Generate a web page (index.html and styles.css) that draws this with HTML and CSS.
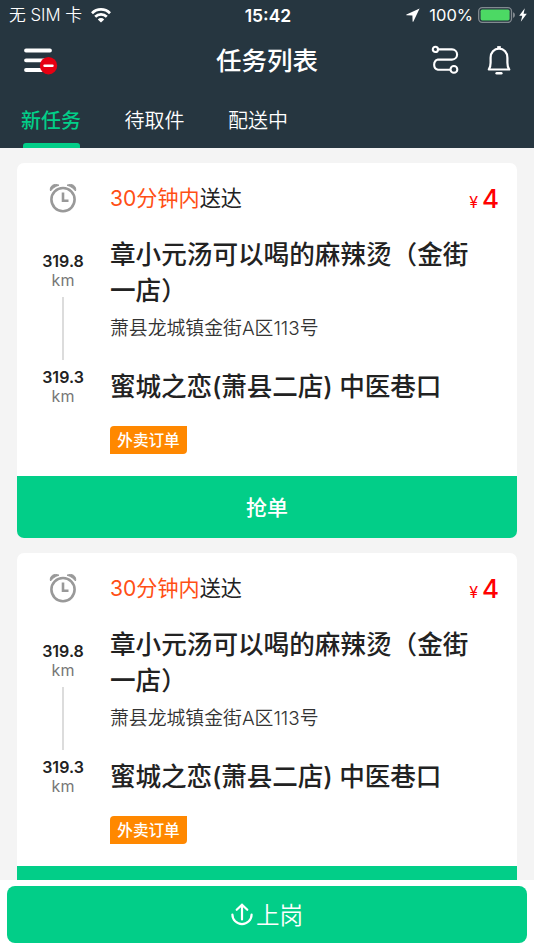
FILE: index.html
```
<!DOCTYPE html>
<html lang="zh-CN">

<head>
  <meta charset="UTF-8">
  <meta name="viewport" content="width=device-width, initial-scale=1.0">
  <title>任务列表</title>
  <link rel="stylesheet" href="styles.css">
</head>

<body>
  <header class="header">
    <div class="status">
      <div class="status-left">
        <span>无 SIM 卡</span>
        <svg class="wifi" width="20" height="15" viewBox="0 0 20 15" fill="none" stroke="#fff" stroke-width="2.7">
          <path d="M1 5.2a12.7 12.7 0 0 1 18 0" />
          <path d="M4.2 8.8a8.2 8.2 0 0 1 11.6 0" />
          <path d="M10 14.6l-3.2-3.2a4.6 4.6 0 0 1 6.4 0z" fill="#fff" stroke="none" />
        </svg>
      </div>
      <div class="status-time">15:42</div>
      <div class="status-right">
        <svg width="14" height="14" viewBox="0 0 14 14" fill="#fff"><path d="M13.6.4L.5 6.500c-.4.3-.3.8.2.8l5.700.3.2 5.800c.1.5.6.6.8.2z" /></svg>
        <span class="percent">100%</span>
        <svg class="battery" width="38" height="16" viewBox="0 0 38 16">
          <rect x=".7" y=".7" width="32.8" height="14.6" rx="3.5" fill="none" stroke="#828a90" stroke-width="1.3" />
          <rect x="2.6" y="2.6" width="29" height="10.8" rx="1.6" fill="#4cd964" />
          <path d="M35 5.2c2.6.7 2.6 4.9 0 5.6z" fill="#828a90" />
        </svg>
        <svg width="8" height="14" viewBox="0 0 8 14" fill="#fff"><path d="M5.8.3L.2 7.8h3.1L1.8 13.7 7.8 5.8H4.6z" /></svg>
      </div>
    </div>

    <div class="navbar">
      <svg class="menu" width="36" height="30" viewBox="0 0 36 30">
        <path d="M3 4.5h24M3 14.3h24M3 24h24" stroke="#fff" stroke-width="3.8" stroke-linecap="round" />
        <circle cx="25.5" cy="19.7" r="8.7" fill="#e60012" />
        <path d="M21.5 19.7h8" stroke="#fff" stroke-width="2.4" stroke-linecap="round" />
      </svg>
      <h1>任务列表</h1>
      <div class="nav-icons">
        <svg width="28" height="30" viewBox="0 0 28 30" fill="none" stroke="#fff" stroke-width="2.1">
          <circle cx="4.4" cy="4.4" r="2.6" />
          <path d="M7 4.4h14a5.1 5.1 0 0 1 0 10.2H7a5.3 5.3 0 0 0 0 10.2h12" />
          <circle cx="22.9" cy="24.4" r="3.4" />
        </svg>
        <svg width="24" height="30" viewBox="0 0 24 30" fill="none" stroke="#fff" stroke-width="2.2">
          <path d="M10.2 2.2h3.6" />
          <path d="M1.8 24.5c1.2-1.6 1.8-3.6 1.8-6.7v-5c0-5.2 3.4-9.1 8.4-9.1s8.4 3.9 8.4 9.1v5c0 3.1.6 5.1 1.8 6.7z" stroke-linejoin="round" />
          <path d="M9.7 28.3h4.6" stroke-width="2.6" stroke-linecap="round" />
        </svg>
      </div>
    </div>

    <nav class="tabs">
      <a class="tab active">新任务</a>
      <a class="tab">待取件</a>
      <a class="tab">配送中</a>
    </nav>
  </header>

  <main class="list">
    <section class="card">
      <div class="card-top">
        <svg class="clock" width="28" height="30" viewBox="0 0 28 30" fill="none" stroke="#999" stroke-width="2.6">
          <circle cx="14" cy="16.6" r="11.6" />
          <path d="M14 9.5v8.2h5.5" />
          <path d="M1.500 8C.2 3 5 0 10 2.200 6 3.500 3.500 5.200 1.500 8z" fill="#999" stroke-width="1" />
          <path d="M26.500 8C27.800 3 23 0 18 2.200c4 1.300 6.500 3 8.500 5.800z" fill="#999" stroke-width="1" />
        </svg>
        <div class="deadline"><span>30分钟内</span>送达</div>
        <div class="price"><small>¥</small>4</div>
      </div>
      <div class="route">
        <div class="distance">
          <b>319.8</b>
          <span>km</span>
          <i class="line"></i>
          <b>319.3</b>
          <span>km</span>
        </div>
        <div class="places">
          <h2>章小元汤可以喝的麻辣烫（金街一店）</h2>
          <p>萧县龙城镇金街A区113号</p>
          <h2 class="to">蜜城之恋(萧县二店) 中医巷口</h2>
          <span class="tag">外卖订单</span>
        </div>
      </div>
      <button class="grab">抢单</button>
    </section>

    <section class="card">
      <div class="card-top">
        <svg class="clock" width="28" height="30" viewBox="0 0 28 30" fill="none" stroke="#999" stroke-width="2.6">
          <circle cx="14" cy="16.6" r="11.6" />
          <path d="M14 9.5v8.2h5.5" />
          <path d="M1.500 8C.2 3 5 0 10 2.200 6 3.500 3.500 5.200 1.500 8z" fill="#999" stroke-width="1" />
          <path d="M26.500 8C27.800 3 23 0 18 2.200c4 1.300 6.500 3 8.500 5.800z" fill="#999" stroke-width="1" />
        </svg>
        <div class="deadline"><span>30分钟内</span>送达</div>
        <div class="price"><small>¥</small>4</div>
      </div>
      <div class="route">
        <div class="distance">
          <b>319.8</b>
          <span>km</span>
          <i class="line"></i>
          <b>319.3</b>
          <span>km</span>
        </div>
        <div class="places">
          <h2>章小元汤可以喝的麻辣烫（金街一店）</h2>
          <p>萧县龙城镇金街A区113号</p>
          <h2 class="to">蜜城之恋(萧县二店) 中医巷口</h2>
          <span class="tag">外卖订单</span>
        </div>
      </div>
      <button class="grab"></button>
    </section>
  </main>

  <footer class="footer">
    <button class="start">
      <svg width="22" height="24" viewBox="0 0 22 24" fill="none" stroke="#fff" stroke-width="2.2" stroke-linecap="round">
        <path d="M11 16.500V2.500M5.700 6.800L11 1.700l5.300 5.100" />
        <path d="M1.400 11.500a9.600 9.600 0 0 0 19.200 0" />
      </svg>
      <span>上岗</span>
    </button>
  </footer>
</body>

</html>
```
FILE: styles.css
```
* {
  box-sizing: border-box;
}

body {
  margin: 0;
  height: 950px;
  display: flex;
  flex-direction: column;
  overflow: hidden;
  background: #f4f4f4;
  color: #222;
  font-family: Inter, 'Noto Sans CJK SC', sans-serif;
}

h1,
h2,
p {
  margin: 0;
}

button {
  border: none;
  padding: 0;
  font-family: inherit;
  color: #fff;
  background: #02ce88;
}

svg {
  display: block;
  flex: none;
}

/* header */
.header {
  flex: none;
  height: 148px;
  background: #263640;
  color: #fff;
}

.status {
  display: grid;
  grid-template-columns: 1fr auto 1fr;
  align-items: center;
  height: 30px;
  padding: 0 7px 0 9px;
  font-size: 16.5px;
}

.status-left,
.status-right {
  display: flex;
  align-items: center;
}

.status-left {
  gap: 9px;
  font-size: 16.8px;
  font-weight: 350;
  line-height: 24px;
}

.status-time {
  font-weight: 600;
  font-size: 17.5px;
}

.status-right {
  justify-content: flex-end;
}

.percent {
  margin: 0 5px 0 9px;
}

.battery {
  margin-right: 3px;
}

.navbar {
  display: grid;
  grid-template-columns: 1fr auto 1fr;
  align-items: center;
  height: 60px;
  padding: 1px 23px 0;
}

h1 {
  padding-top: 1px;
  font-size: 25.5px;
  line-height: 36px;
  font-weight: 500;
}

.nav-icons {
  display: flex;
  justify-content: flex-end;
  gap: 28px;
  padding-bottom: 2px;
}

.tabs {
  display: flex;
  gap: 43.5px;
  height: 58px;
  padding-left: 21px;
}

.tab {
  display: flex;
  flex-direction: column;
  justify-content: space-between;
  height: 58px;
  padding-top: 16px;
  font-size: 20px;
  font-weight: 350;
  line-height: 30px;
}

.active {
  color: #02ce88;
  font-weight: 500;
}

.active::after {
  content: '';
  height: 5px;
  margin: 0 1px 0 2px;
  border-radius: 3px 3px 0 0;
  background: #02ce88;
}

/* task list */
.list {
  flex: 1;
  min-height: 0;
  overflow: hidden;
  padding: 15px 17px 0;
}

.card {
  height: 375px;
  margin-bottom: 15px;
  display: flex;
  flex-direction: column;
  border-radius: 7px;
  overflow: hidden;
  background: #fff;
}

.card-top {
  display: flex;
  align-items: center;
  height: 71px;
  padding-right: 18px;
}

.clock {
  margin: 0 33px 2px 32px;
}

.deadline {
  flex: 1;
  padding-bottom: 3px;
  font-size: 21.1px;
}

.deadline span {
  color: #ff4f15;
}

.price {
  padding-bottom: 1px;
  color: #f00;
  font-size: 26px;
  font-weight: 500;
}

.price small {
  margin-right: 4px;
  font-size: 16px;
  font-weight: 400;
}

.route {
  flex: 1;
  display: flex;
}

.distance {
  width: 92px;
  padding-top: 18px;
  display: flex;
  flex-direction: column;
  align-items: center;
  font-size: 16px;
  line-height: 19px;
}

.distance b {
  font-weight: 600;
}

.distance span {
  color: #777;
}

.line {
  width: 2px;
  height: 63px;
  margin: 7px 0 8px;
  background: #dcdcdc;
}

.places {
  flex: 1;
  padding: 3px 40px 0 1px;
}

h2 {
  font-size: 25.6px;
  line-height: 36px;
  font-weight: 500;
}

p {
  margin-top: 6px;
  font-size: 18.85px;
  font-weight: 350;
  line-height: 28px;
  color: #333;
}

.to {
  margin-top: 26px;
  letter-spacing: -0.1px;
  white-space: nowrap;
}

.tag {
  display: block;
  width: 77px;
  height: 28px;
  margin-top: 21px;
  border-radius: 4px 0 4px 0;
  background: #ff8800;
  color: #fff;
  font-size: 15.6px;
  font-weight: 500;
  line-height: 29px;
  text-align: center;
}

.grab {
  height: 62px;
  padding-bottom: 2px;
  font-size: 21px;
  font-weight: 500;
}

/* bottom button */
.footer {
  flex: none;
  height: 70px;
  padding: 6px 7px 7px;
  background: #fff;
}

.start {
  display: flex;
  align-items: center;
  justify-content: center;
  gap: 3px;
  width: 100%;
  height: 57px;
  border-radius: 8px;
  font-size: 23.5px;
  font-weight: 350;
}

.start span {
  padding-bottom: 2px;
}
```
